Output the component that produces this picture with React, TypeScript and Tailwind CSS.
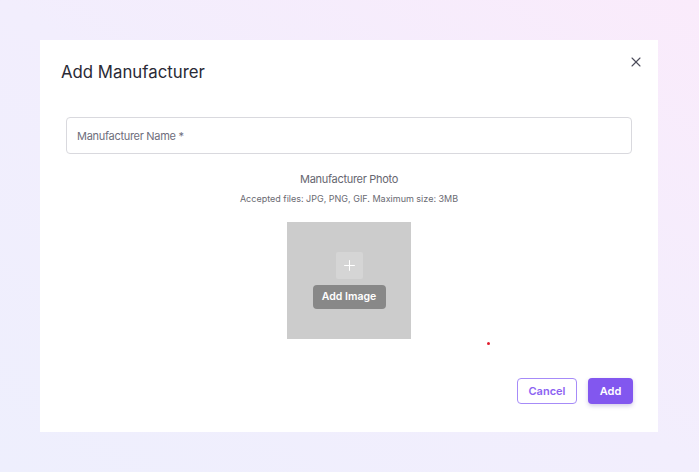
import { X, Plus } from "lucide-react";

export default function App() {
  return (
    <div
      className="w-[699px] h-[472px] pl-10 pt-10 pr-[41px] pb-10 bg-gradient-to-tr from-[#eeeffd] via-[#f2eefd] to-[#faebfb] flex"
      style={{ fontFamily: "Inter, 'Liberation Sans', sans-serif" }}
    >
      <div className="relative flex-1 bg-white flex flex-col">
        <button className="absolute top-[14px] right-[14px] w-4 h-4 flex items-center justify-center text-[#4b4b5a]">
          <X size={16} strokeWidth={1.6} />
        </button>
        <span className="absolute left-[447px] top-[302px] w-[3px] h-[3px] rounded-full bg-[#e11d2e]" />

        <div className="px-[21px] pt-[18px]">
          <h2 className="text-[16.8px] leading-[28px] text-[#2a2a36] font-normal">Add Manufacturer</h2>
        </div>

        <div className="px-[26px] pt-[31px] flex flex-col">
          <input
            className="h-[37px] w-full border border-[#d9d9de] rounded-[4px] px-[10px] text-[11px] tracking-[-0.3px] text-[#333] placeholder:text-[#6e6e7c] outline-none"
            placeholder="Manufacturer Name *"
          />
          <div className="flex flex-col items-center pt-[15px]">
            <p className="text-[11px] tracking-[-0.3px] leading-[20px] text-[#666670]">Manufacturer Photo</p>
            <p className="text-[9px] leading-[16px] text-[#6a6a72] mt-[2px]">Accepted files: JPG, PNG, GIF. Maximum size: 3MB</p>
            <div className="mt-[15px] w-[124px] h-[117px] bg-[#cccccc] flex flex-col items-center justify-center gap-[6px]">
              <div className="w-[27px] h-[27px] bg-[#d5d5d5] rounded-[2px] flex items-center justify-center text-white">
                <Plus size={17} strokeWidth={1.4} />
              </div>
              <button className="w-[73px] h-[24px] rounded-[4px] bg-[#888888] text-white text-[10.5px] font-semibold">
                Add Image
              </button>
            </div>
          </div>
        </div>

        <div className="mt-auto flex justify-end gap-[11px] pr-[25px] pb-[28px]">
          <button className="w-[60px] h-[26px] rounded-[4px] border border-[#a68bf8] text-[#8c63f2] text-[11px] font-semibold bg-white">
            Cancel
          </button>
          <button className="w-[45px] h-[26px] rounded-[4px] bg-[#8257ef] text-white text-[11px] font-semibold shadow-[0_2px_4px_rgba(80,50,160,0.25)]">
            Add
          </button>
        </div>
      </div>
    </div>
  );
}
